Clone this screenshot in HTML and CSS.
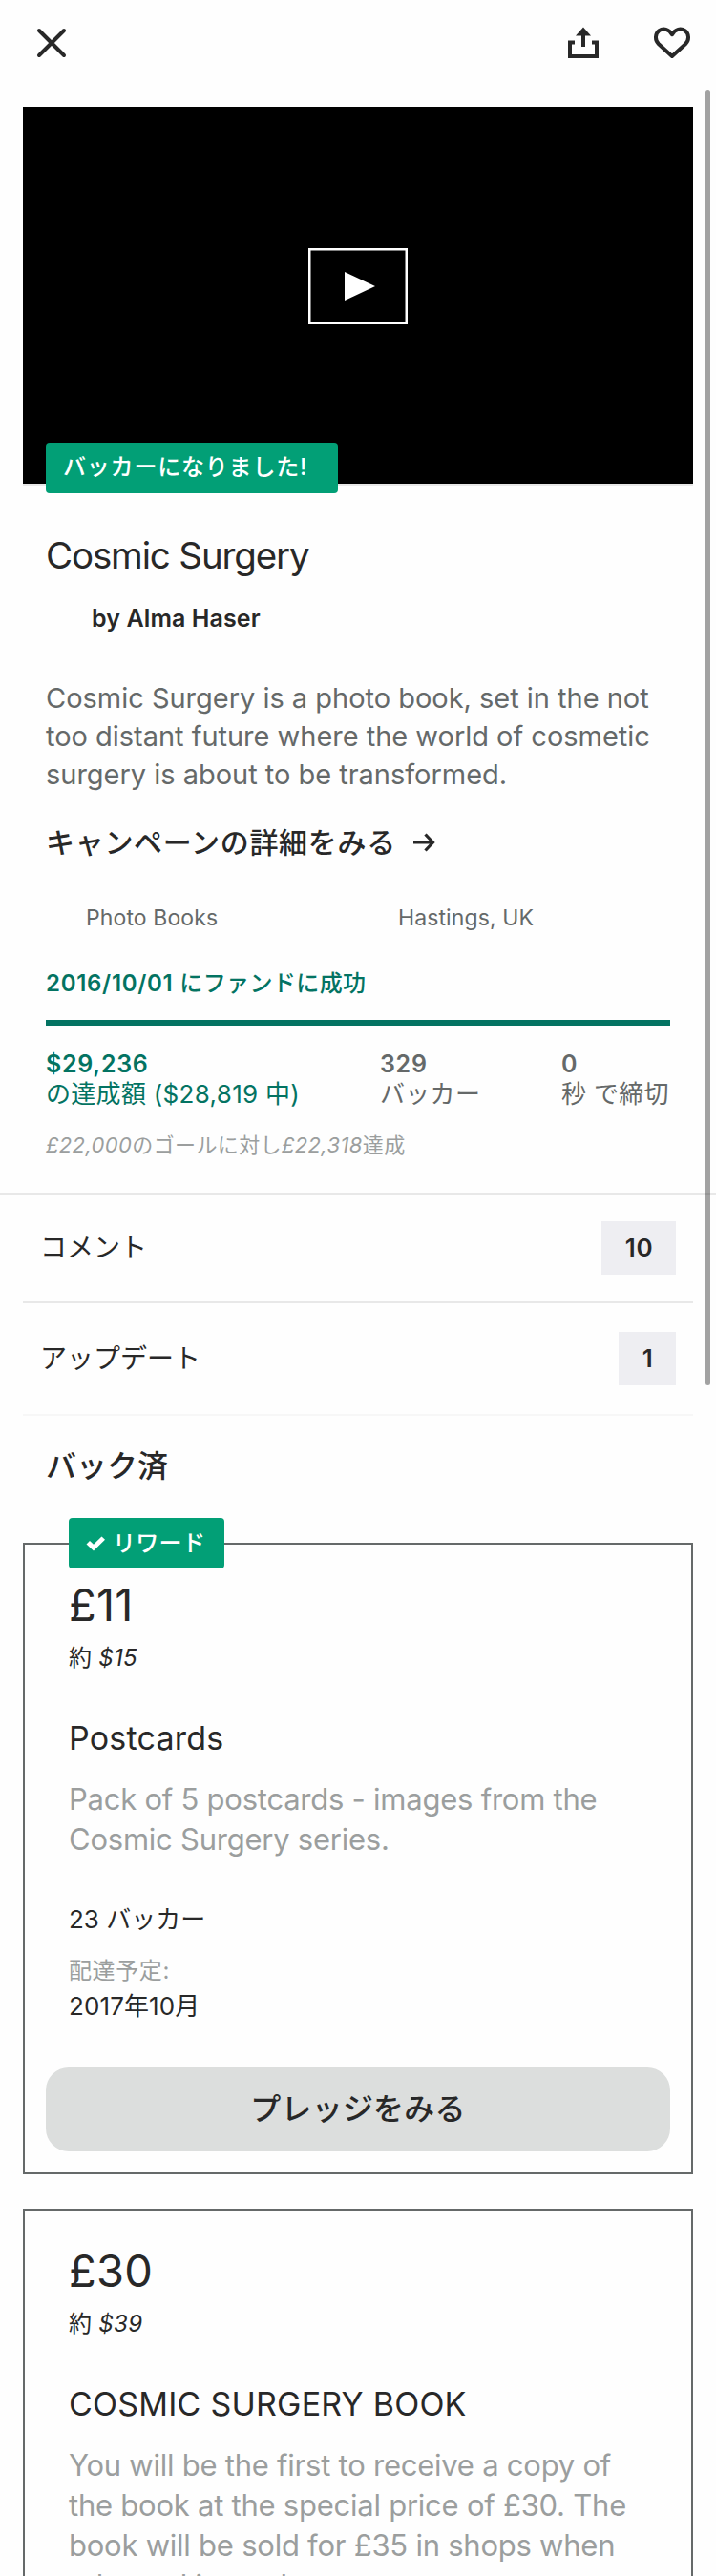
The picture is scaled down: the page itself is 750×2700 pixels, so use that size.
FILE: index.html
```html
<!DOCTYPE html>
<html lang="ja">
<head>
<meta charset="utf-8">
<title>Cosmic Surgery</title>
<link rel="stylesheet" href="styles.css">
</head>
<body>
<div class="page">
  <header class="topbar">
    <svg class="icon-close" width="32" height="32" viewBox="0 0 32 32"><path d="M3 3L29 29M29 3L3 29" fill="none" stroke="#282828" stroke-width="4" stroke-linecap="round"/></svg>
    <div class="actions">
      <svg width="34" height="34" viewBox="0 0 34 34"><path d="M8 16.500H3V31H31V16.500H26" fill="none" stroke="#282828" stroke-width="4"/><path d="M17 21V8" fill="none" stroke="#282828" stroke-width="4"/><path d="M17 0.500L25 9.500H9Z" fill="#282828"/></svg>
      <svg width="40" height="34" viewBox="0 0 40 34"><path d="M20 31L5.800 18C1.700 14 2.200 7.300 6.400 4.200C10.800 1.100 16.800 2.400 20 8.200C23.200 2.400 29.200 1.100 33.600 4.200C37.800 7.300 38.300 14 34.200 18Z" fill="none" stroke="#282828" stroke-width="4" stroke-linejoin="round"/></svg>
    </div>
  </header>

  <section class="video">
    <svg width="104" height="80" viewBox="0 0 104 80"><rect x="1.250" y="1.250" width="101.500" height="77.500" fill="none" stroke="#fff" stroke-width="2.500"/><path d="M38 25L70 40L38 55Z" fill="#fff"/></svg>
    <div class="tag tag-video">バッカーになりました!</div>
  </section>

  <section class="info">
    <h1 class="title">Cosmic Surgery</h1>
    <p class="creator">by Alma Haser</p>
    <p class="blurb">Cosmic Surgery is a photo book, set in the not<br>too distant future where the world of cosmetic<br>surgery is about to be transformed.</p>
    <p class="campaign"><span>キャンペーンの詳細をみる</span><svg width="24" height="22" viewBox="0 0 24 22"><path d="M1 11H21M13.500 2.500L21.500 11L13.500 19.500" fill="none" stroke="#282828" stroke-width="3.200"/></svg></p>
    <div class="meta"><span class="category">Photo Books</span><span class="location">Hastings, UK</span></div>
    <p class="funded"><span class="funded-date">2016/10/01</span> にファンドに成功</p>
    <div class="progress"></div>
    <div class="stats">
      <div class="stat pledged"><b>$29,236</b><span>の達成額 ($28,819 中)</span></div>
      <div class="stat backers"><b>329</b><span>バッカー</span></div>
      <div class="stat remaining"><b>0</b><span>秒 で締切</span></div>
    </div>
    <p class="goal"><i>£22,000</i>のゴールに対し<i>£22,318</i>達成</p>
  </section>

  <nav class="links">
    <div class="row row-comments"><span>コメント</span><b class="count">10</b></div>
    <div class="row row-updates"><span>アップデート</span><b class="count">1</b></div>
  </nav>

  <h2 class="section-title">バック済</h2>

  <article class="card">
    <div class="tag tag-reward"><svg width="20" height="16" viewBox="0 0 20 16"><path d="M0.500 8.500L4 5L8 8.800L16.500 0.500L20 3.800L8 15.500Z" fill="#fff"/></svg><span>リワード</span></div>
    <div class="price">£11</div>
    <div class="approx">約 <i>$15</i></div>
    <h3 class="reward-title">Postcards</h3>
    <p class="desc">Pack of 5 postcards - images from the<br>Cosmic Surgery series.</p>
    <div class="reward-backers">23 バッカー</div>
    <div class="delivery-label">配達予定:</div>
    <div class="delivery">2017年10月</div>
    <div class="button">プレッジをみる</div>
  </article>

  <article class="card card-next">
    <div class="price">£30</div>
    <div class="approx">約 <i>$39</i></div>
    <h3 class="reward-title">COSMIC SURGERY BOOK</h3>
    <p class="desc">You will be the first to receive a copy of<br>the book at the special price of £30. The<br>book will be sold for £35 in shops when<br>released in total</p>
  </article>
  <div class="scrollbar"></div>
</div>
</body>
</html>
```
FILE: styles.css
```css
* { box-sizing: border-box; margin: 0; padding: 0; }
body { background: #fefefe; }
.page {
  position: relative;
  width: 750px;
  height: 2700px;
  overflow: hidden;
  font-family: Inter, "Noto Sans CJK JP", sans-serif;
  font-weight: 400;
  color: #282828;
  white-space: nowrap;
}
svg { display: block; flex: none; }

.topbar { height: 112px; padding: 28px 26px 0 38px; display: flex; justify-content: space-between; align-items: flex-start; }
.icon-close { margin-top: 1px; }
.actions { display: flex; gap: 56px; }

.video {
  position: relative;
  height: 397px;
  margin: 0 24px;
  background: #000;
  border-bottom: 2px solid #e8e8e8;
  display: flex;
  justify-content: center;
  padding-top: 148px;
}
.tag {
  position: absolute;
  height: 53px;
  border-radius: 4px;
  background: #029f76;
  color: #fff;
  font-size: 24px;
  font-weight: 500;
  line-height: 51px;
}
.tag-video { left: 24px; top: 352px; width: 306px; padding-left: 18px; letter-spacing: 0.800px; }
.tag-reward { left: 46px; top: -28px; width: 163px; padding-left: 18px; display: flex; align-items: center; gap: 8px; letter-spacing: 0.300px; }

.info { padding: 49px 48px 36px; }
.title { font-size: 38.5px; font-weight: 400; line-height: 48px; letter-spacing: -1.150px; }
.creator { margin: 26px 0 0 48px; font-size: 25px; font-weight: 600; line-height: 32px; letter-spacing: 0.100px; }
.blurb { margin-top: 48px; font-size: 29px; line-height: 40px; color: #656969; letter-spacing: -0.020px; }
.campaign { margin-top: 31px; font-size: 30px; font-weight: 500; line-height: 40px; letter-spacing: 0.700px; display: flex; align-items: center; gap: 17px; }
.meta { margin-top: 45px; padding-left: 42px; font-size: 23px; line-height: 28px; color: #656969; letter-spacing: 0.100px; display: grid; grid-template-columns: 327px 1fr; }
.funded { margin-top: 39px; font-size: 24px; font-weight: 500; line-height: 32px; color: #037362; letter-spacing: 0.400px; }
.funded-date { font-weight: 600; letter-spacing: 0.700px; }
.progress { margin-top: 22px; height: 6px; background: #037362; }
.stats { margin-top: 24px; display: grid; grid-template-columns: 350px 190px 1fr; color: #656969; }
.stat { display: flex; flex-direction: column; font-size: 26px; line-height: 32px; letter-spacing: 0.300px; }
.stat b { font-size: 25px; font-weight: 600; letter-spacing: 0.700px; }
.pledged { color: #037362; }
.goal { margin-top: 23px; font-size: 22px; line-height: 28px; color: #9b9e9e; letter-spacing: 0.380px; }

.links { border-top: 2px solid #e8e8e8; padding: 0 24px; }
.row { display: flex; justify-content: space-between; align-items: center; padding: 0 18px; font-size: 28px; line-height: 40px; }
.row-comments { height: 114px; border-bottom: 2px solid #e8e8e8; }
.row-updates { height: 118px; border-bottom: 2px solid #f7f7f7; }
.count { height: 56px; padding: 0 23.5px 0 24.5px; line-height: 56px; font-size: 26px; font-weight: 600; letter-spacing: 0.800px; background: #eeeef2; }

.section-title { margin: 33px 48px 60px; font-size: 32px; font-weight: 500; line-height: 40px; }

.card { position: relative; margin: 0 24px 36px; border: 2px solid #656969; padding: 35px 46px 22px; }
.card-next { height: 420px; }
.price { font-size: 47px; line-height: 56px; letter-spacing: 0.200px; }
.approx { margin-top: 14px; font-size: 24px; line-height: 28px; letter-spacing: 0.300px; }
.reward-title { margin-top: 50px; font-size: 34px; font-weight: 400; line-height: 40px; letter-spacing: 0.220px; }
.desc { margin-top: 23px; font-size: 31px; line-height: 42px; color: #9b9e9e; letter-spacing: -0.240px; }
.reward-backers { margin-top: 47px; font-size: 26px; line-height: 32px; }
.delivery-label { margin-top: 24px; font-size: 24px; line-height: 28px; color: #9b9e9e; letter-spacing: 0.600px; }
.delivery { margin-top: 7px; font-size: 26px; line-height: 32px; letter-spacing: 0.100px; }
.button { margin: 48px -24px 0; height: 88px; border-radius: 24px; background: #dcdedd; font-size: 32px; font-weight: 500; line-height: 88px; letter-spacing: 0.200px; text-align: center; }

.scrollbar { position: absolute; left: 739px; top: 94px; width: 5px; height: 1358px; border-radius: 3px; background: rgba(0, 0, 0, 0.360); }
```
